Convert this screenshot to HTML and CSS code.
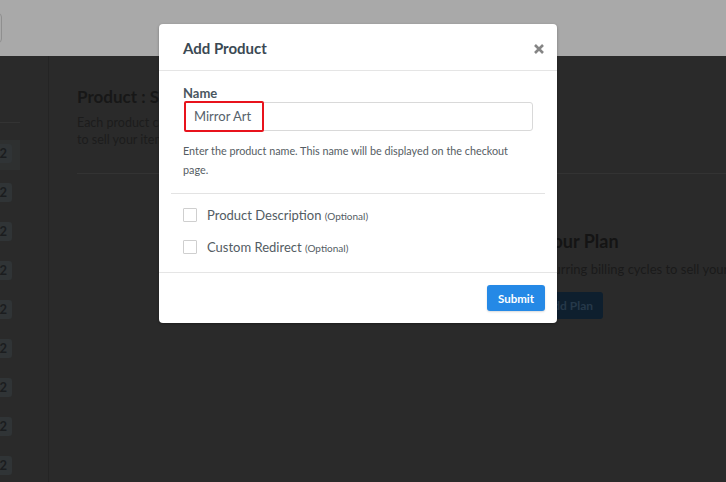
FILE: index.html
```html
<!DOCTYPE html>
<html>
<head>
<meta charset="utf-8">
<link rel="stylesheet" href="styles.css">
</head>
<body>
<div class="page">
  <header class="topbar">
    <div class="top-btn"></div>
  </header>
  <div class="layout">
    <aside class="sidebar">
      <div class="side-head"></div>
      <ul class="side-list">
        <li class="side-row active"><span class="badge">2</span></li>
        <li class="side-row"><span class="badge">2</span></li>
        <li class="side-row"><span class="badge">2</span></li>
        <li class="side-row"><span class="badge">2</span></li>
        <li class="side-row"><span class="badge">2</span></li>
        <li class="side-row"><span class="badge">2</span></li>
        <li class="side-row"><span class="badge">2</span></li>
        <li class="side-row"><span class="badge">2</span></li>
        <li class="side-row"><span class="badge">2</span></li>
      </ul>
    </aside>
    <main class="content">
      <section class="intro">
        <h2 class="intro-title">Product : Single Item</h2>
        <p class="intro-text">Each product can have multiple plans. Use one time or recurring plans<br>to sell your items.</p>
      </section>
      <section class="plan">
        <h2 class="plan-title">Create Your Plan</h2>
        <p class="plan-text">Use one time or recurring billing cycles to sell your items</p>
        <button class="plan-btn">Add Plan</button>
      </section>
    </main>
  </div>

  <div class="modal">
    <div class="modal-head">
      <h3 class="modal-title">Add Product</h3>
      <svg class="modal-close" width="12" height="12" viewBox="0 0 12 12" aria-hidden="true">
        <path d="M2 2 L10 10 M10 2 L2 10" stroke="#858585" stroke-width="2.6" stroke-linecap="butt"/>
      </svg>
    </div>
    <div class="modal-body">
      <label class="field-label">Name</label>
      <div class="input-wrap">
        <div class="input">Mirror Art</div>
        <div class="highlight"></div>
      </div>
      <p class="help">Enter the product name. This name will be displayed on the checkout page.</p>
      <hr class="divider">
      <div class="check-row first"><span class="checkbox"></span><span class="check-label">Product Description <small>(Optional)</small></span></div>
      <div class="check-row"><span class="checkbox"></span><span class="check-label">Custom Redirect <small>(Optional)</small></span></div>
    </div>
    <div class="modal-foot">
      <button class="submit">Submit</button>
    </div>
  </div>
</div>
</body>
</html>
```

FILE: styles.css
```css
* { box-sizing: border-box; }
html, body { margin: 0; padding: 0; }
body {
  width: 726px;
  height: 482px;
  overflow: hidden;
  font-family: Lato, "Open Sans", sans-serif;
  background: #2a2a2a;
}
.page { position: relative; width: 726px; height: 482px; overflow: hidden; }

.topbar {
  height: 56px;
  background: #a9a9a9;
  padding-top: 13px;
}
.top-btn {
  width: 10px;
  height: 30px;
  margin-left: -8px;
  border: 1px solid #8f8f8f;
  border-radius: 4px;
}

.layout {
  display: flex;
  height: 426px;
  background: #2a2a2a;
}
.sidebar {
  width: 49px;
  border-right: 1px solid #242424;
  flex-shrink: 0;
}
.side-head {
  height: 67px;
  width: 20px;
  border-bottom: 1px solid #333;
}
.side-list { list-style: none; margin: 0; padding: 16px 0 0; }
.side-row {
  width: 20px;
  height: 39px;
  display: flex;
  align-items: flex-start;
  padding-top: 5px;
}
.side-row.active { background: linear-gradient(#2a2a2a 0, #2a2a2a 1px, #2e3030 1px, #2e3030 31px, #2a2a2a 31px); }
.badge {
  display: inline-block;
  width: 26px;
  height: 19px;
  margin-left: -14px;
  background: #303436;
  border-radius: 3px;
  color: #1b1d1f;
  font: 700 13px/19px Lato, sans-serif;
  text-align: right;
  padding-right: 5px;
}

.content { flex: 1; padding: 0 0 0 28px; min-width: 0; overflow: hidden; }
.intro { border-bottom: 1px solid #333; padding-top: 30px; height: 118px; }
.intro-title { margin: 0; font: 700 17px/22px Lato, sans-serif; color: #171717; }
.intro-text { margin: 6px 0 0; font: 400 12.5px/17px Lato, sans-serif; color: #1c1c1c; }

.plan { padding: 55px 0 0 400px; white-space: nowrap; }
.plan-title { margin: 0 0 0 9px; font: 700 18px/24px Lato, sans-serif; color: #141414; }
.plan-text { margin: 7px 0 0 -35px; font: 400 13px/18px Lato, sans-serif; color: #1a1a1a; }
.plan-btn {
  margin-top: 14px;
  margin-left: 58px;
  height: 27px;
  padding: 0 10px;
  border: 0;
  border-radius: 3px;
  background: #0e1f2e;
  color: #26394a;
  font: 700 12px Lato, sans-serif;
}

.modal {
  position: absolute;
  left: 159px;
  top: 24px;
  width: 398px;
  height: 299px;
  background: #fff;
  border-radius: 4px;
  box-shadow: 0 1px 3px rgba(0,0,0,0.3);
}
.modal-head {
  height: 47px;
  border-bottom: 1px solid #e5e5e5;
  display: flex;
  align-items: center;
  justify-content: space-between;
  padding: 2px 12px 0 24px;
}
.modal-title { margin: 0; font: 700 15px/20px Lato, sans-serif; color: #3b4953; }
.modal-close { display: block; margin-top: 2px; }

.modal-body { padding: 14px 12px 0; }
.field-label { display: block; padding-left: 12px; font: 700 13px/16px Lato, sans-serif; color: #4a5660; }
.input-wrap { position: relative; margin: 1px 12px 0 13px; }
.input {
  height: 29px;
  border: 1px solid #d9d9d9;
  border-radius: 3px;
  padding-left: 9px;
  font: 400 13px/27px Lato, sans-serif;
  color: #56626b;
}
.highlight {
  position: absolute;
  left: 0;
  top: -1px;
  width: 80px;
  height: 31px;
  border: 2px solid #e8131c;
  border-radius: 2px;
}
.help {
  margin: 10px 0 0;
  padding: 0 20px 0 12px;
  font: 400 10.8px/19px Lato, sans-serif;
  color: #555d63;
}
.divider { border: 0; border-top: 1px solid #e3e3e3; margin: 14px 0 0; }
.check-row { display: flex; align-items: center; height: 32px; padding-left: 12px; }
.check-row.first { margin-top: 5px; }
.checkbox {
  width: 14px;
  height: 14px;
  border: 1.5px solid #cfcfcf;
  border-radius: 1px;
  margin-right: 10px;
}
.check-label { font: 400 13px Lato, sans-serif; color: #535c63; }
.check-label small { font-size: 10px; }

.modal-foot {
  position: absolute;
  left: 0; right: 0; bottom: 0;
  height: 51px;
  border-top: 1px solid #e5e5e5;
  display: flex;
  justify-content: flex-end;
  align-items: flex-start;
  padding: 12px 12px 0;
}
.submit {
  width: 58px;
  height: 26px;
  border: 0;
  border-radius: 3px;
  background: #2589e6;
  color: #fff;
  font: 700 11.5px Lato, sans-serif;
  box-shadow: 0 1px 2px rgba(0,0,0,0.15);
}
```
